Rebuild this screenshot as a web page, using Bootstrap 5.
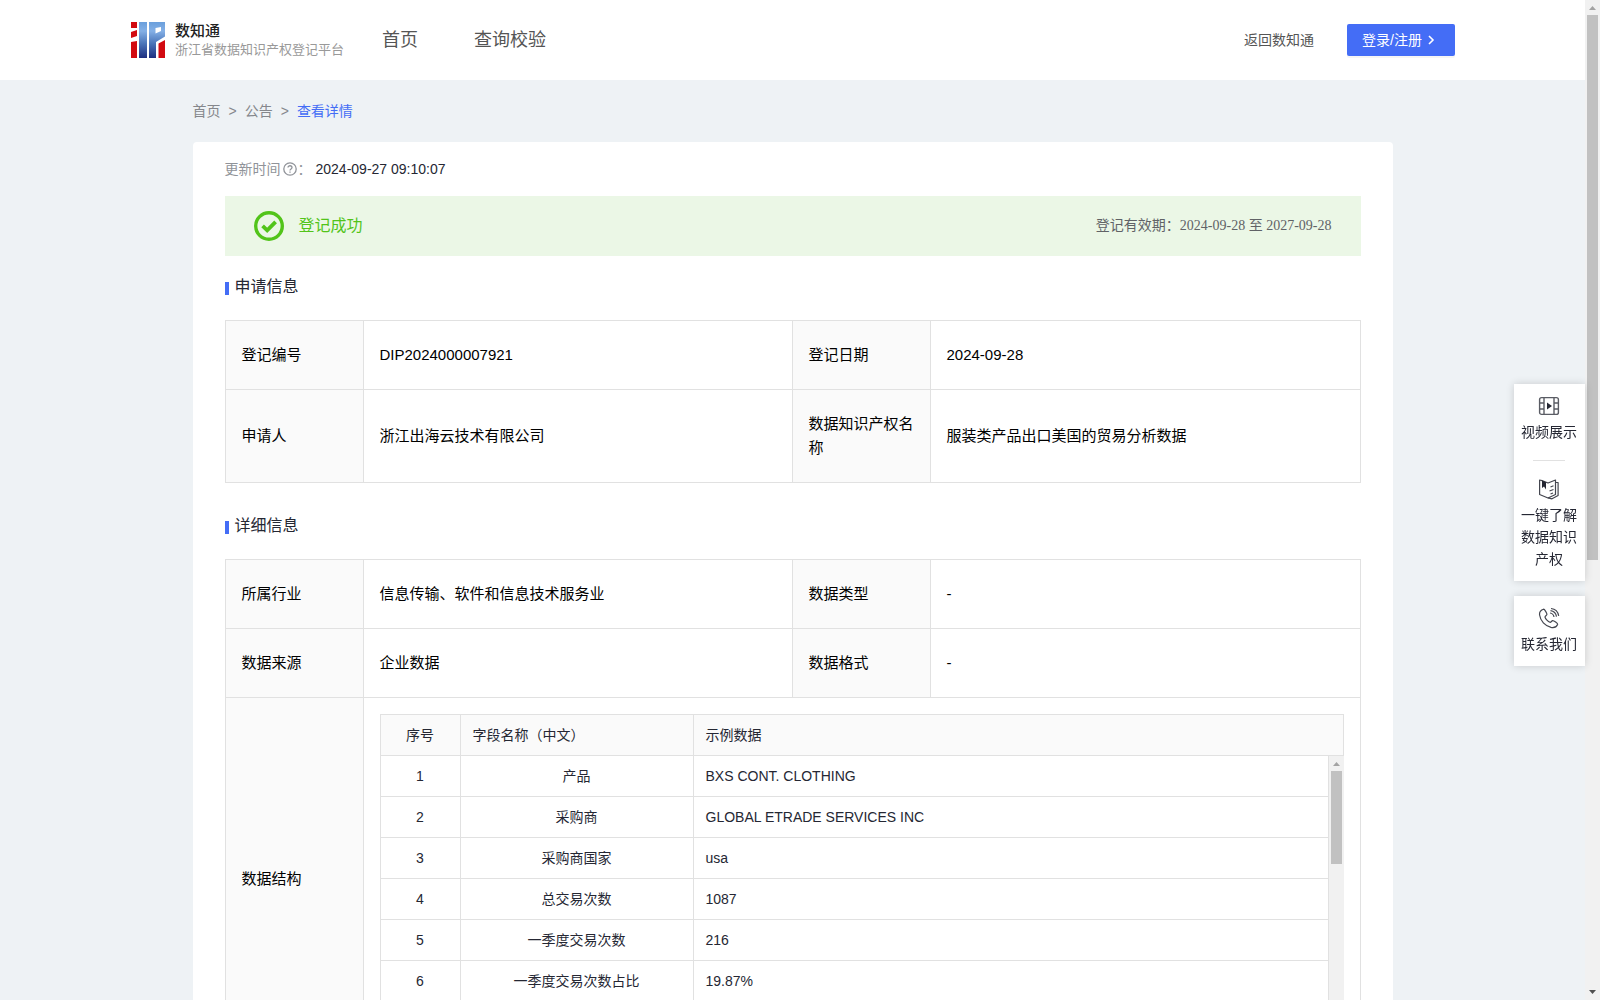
<!DOCTYPE html>
<html lang="zh-CN">
<head>
<meta charset="utf-8">
<meta name="viewport" content="width=device-width, initial-scale=1">
<title>数知通 - 查看详情</title>
<link href="https://cdn.jsdelivr.net/npm/bootstrap@5.3.0/dist/css/bootstrap.min.css" rel="stylesheet">
<style>
  body { font-family: "Liberation Sans", "Noto Sans CJK SC", sans-serif; font-size: 14px; line-height: 22px; color: #252733; background: #eef2f5; }
  a { text-decoration: none; color: inherit; }
  .page-scroll { overflow-y: auto; scrollbar-width: none; }
  .page-scroll::-webkit-scrollbar { display: none; }
  .scroll-track { width: 15px; background: #f1f1f1; padding: 4px 2px; }
  .scroll-track svg { width: 11px; height: 7px; }
  .scroll-thumb { background: #c1c1c1; margin-top: 4px; }
  .page-thumb { height: 545px; }
  .list-thumb { height: 93px; }

  .site-header { height: 80px; padding: 0 130px; }
  .brand-logo { width: 36px; height: 36px; }
  .brand-text { margin-left: 9px; }
  .brand-name { font-size: 15px; line-height: 20px; font-weight: 500; color: #222; }
  .brand-sub { font-size: 13px; line-height: 18px; color: #999; }
  .site-nav { font-size: 18px; gap: 56px; margin-left: 38px; color: #555; }
  .back-link { margin-right: 33px; color: #555; }
  .login-btn { height: 32px; padding: 0 19px 0 15px; border: 0; border-radius: 2px; font-size: 14px; line-height: 22px; color: #fff; background: #446df6; box-shadow: 0 2px 0 rgba(0,0,0,.04); }
  .login-btn:hover { color: #fff; background: #3860e6; }

  .wrap { max-width: 1200px; }
  .crumbs { padding: 20px 0; color: #85878c; gap: 8px; }
  .crumbs .current { color: #446df6; }
  .sheet { border-radius: 4px; padding: 16px 32px 32px; }
  .muted { color: #909399; }
  .help-icon { margin: 0 1px 0 2px; }
  .status-bar { height: 60px; padding: 0 29px; margin: 16px 0 19px; background: #ebf7e6; }
  .status-text { font-size: 16px; color: #52c41a; margin-left: 15px; }
  .validity { font-family: "Liberation Serif", "Noto Sans CJK SC", serif; color: #606266; }
  .sec-title { font-size: 16px; line-height: 24px; margin: 0 0 21px; font-weight: 400; }
  .sec-title::before { content: ""; width: 4px; height: 13px; margin: 2px 6px 0 0; background: #446df6; }
  .info { table-layout: fixed; width: 100%; border-collapse: collapse; font-size: 15px; line-height: 24px; color: #000; }
  .info.upper { margin-bottom: 31px; }
  .info > * > tr > th, .info > * > tr > td { border: 1px solid #e1e1e1; padding: 22px 14px 22px 16px; font-weight: 400; vertical-align: middle; }
  .info > * > tr > th { background: #fafafa; }
  .info > * > tr > td.nest { padding: 16px; }
  .label-col { width: 138px; }
  .value-col { width: 429px; }

  .fields { table-layout: fixed; width: 100%; border-collapse: collapse; font-size: 14px; line-height: 20px; color: #252733; }
  .fields th, .fields td { border: 1px solid #e1e1e1; padding: 10px 12px; font-weight: 400; }
  .fields th { background: #fafafa; }
  .fields .no-col { width: 80px; }
  .fields .name-col { width: 233px; }
  .fields tbody td:nth-child(-n+2) { text-align: center; }
  .list-body { height: 287px; }
  .list-body .fields { margin-top: -1px; }
  .list-rows { overflow-y: auto; scrollbar-width: none; }

  .side-tools { position: fixed; right: 15px; top: 384px; width: 71px; gap: 15px; }
  .side-box { box-shadow: 0 0 8px rgba(0,0,0,.16); padding: 11px 8px 11px 7px; }
  .side-box a { line-height: 22px; }
  .side-box svg { width: 22px; height: 22px; margin-bottom: 4px; }
  .side-box hr { width: 32px; margin: 17px auto; border-color: #888; }
</style>
<script src="https://cdn.jsdelivr.net/npm/bootstrap@5.3.0/dist/js/bootstrap.bundle.min.js"></script>
</head>
<body>
<div class="d-flex vh-100">
  <div class="page-scroll flex-grow-1">
    <header class="site-header bg-white d-flex align-items-center">
      <a href="#" class="d-flex align-items-center">
        <svg class="brand-logo" viewBox="0 0 36 36" aria-hidden="true">
          <defs><linearGradient id="blue" gradientUnits="userSpaceOnUse" x1="0" y1="0" x2="0" y2="36"><stop offset="0" stop-color="#6a9fdc"/><stop offset=".25" stop-color="#84b0e6"/><stop offset=".6" stop-color="#4a74b8"/><stop offset="1" stop-color="#1e2f80"/></linearGradient></defs>
          <g fill="#d20a11"><path d="M1 0h6v6H1zM1 10l6-2v6l-6 2zM1 20l6-1v17H1zM28.500 21.500L35 18v18h-6.500z"/></g>
          <path fill="url(#blue)" d="M9 0h8v36H9z"/>
          <path fill="url(#blue)" fill-rule="evenodd" d="M19 0h16v14.500L26 20v16h-7zM25.500 6v5.500L31 9V5z"/>
        </svg>
        <span class="brand-text d-flex flex-column">
          <span class="brand-name">数知通</span>
          <span class="brand-sub">浙江省数据知识产权登记平台</span>
        </span>
      </a>
      <nav class="site-nav d-flex">
        <a href="#">首页</a>
        <a href="#">查询校验</a>
      </nav>
      <div class="ms-auto d-flex align-items-center">
        <a href="#" class="back-link">返回数知通</a>
        <button type="button" class="btn login-btn d-flex align-items-center">登录/注册
          <svg class="ms-1" width="10" height="10" viewBox="0 0 10 10" fill="none" stroke="#fff" stroke-width="1.600" aria-hidden="true"><path d="M3 1l4 4-4 4"/></svg>
        </button>
      </div>
    </header>

    <main class="wrap mx-auto">
      <nav class="crumbs d-flex" aria-label="breadcrumb">
        <a href="#">首页</a><span>&gt;</span><a href="#">公告</a><span>&gt;</span><a href="#" class="current">查看详情</a>
      </nav>

      <section class="sheet bg-white">
        <div class="d-flex align-items-center">
          <span class="muted">更新时间</span>
          <svg class="help-icon" width="14" height="14" viewBox="0 0 14 14" fill="none" stroke="#909399" stroke-width="1.300" aria-hidden="true"><circle cx="7" cy="7" r="6.200"/><path d="M5 5.600c0-2.500 4-2.400 4 0C9 7 7 7 7 8.600M7 9.600v1.200"/></svg>
          <span class="muted me-1">：</span>
          <span>2024-09-27 09:10:07</span>
        </div>

        <div class="status-bar d-flex align-items-center">
          <svg width="30" height="30" viewBox="0 0 30 30" fill="none" stroke="#52c41a" aria-hidden="true"><circle cx="15" cy="15" r="13.300" stroke-width="3.400"/><path d="M8.600 14.800l4.600 4.500 8.400-8.500" stroke-width="3.800"/></svg>
          <span class="status-text">登记成功</span>
          <span class="validity ms-auto">登记有效期：2024-09-28 至 2027-09-28</span>
        </div>

        <h2 class="sec-title d-flex align-items-center">申请信息</h2>
        <table class="info upper">
          <colgroup><col class="label-col"><col class="value-col"><col class="label-col"><col></colgroup>
          <tbody>
            <tr><th scope="row">登记编号</th><td>DIP2024000007921</td><th scope="row">登记日期</th><td>2024-09-28</td></tr>
            <tr><th scope="row">申请人</th><td>浙江出海云技术有限公司</td><th scope="row">数据知识产权名称</th><td>服装类产品出口美国的贸易分析数据</td></tr>
          </tbody>
        </table>

        <h2 class="sec-title d-flex align-items-center">详细信息</h2>
        <table class="info">
          <colgroup><col class="label-col"><col class="value-col"><col class="label-col"><col></colgroup>
          <tbody>
            <tr><th scope="row">所属行业</th><td>信息传输、软件和信息技术服务业</td><th scope="row">数据类型</th><td>-</td></tr>
            <tr><th scope="row">数据来源</th><td>企业数据</td><th scope="row">数据格式</th><td>-</td></tr>
            <tr>
              <th scope="row">数据结构</th>
              <td colspan="3" class="nest">
                <table class="fields">
                  <colgroup><col class="no-col"><col class="name-col"><col></colgroup>
                  <thead><tr><th class="text-center">序号</th><th>字段名称（中文）</th><th>示例数据</th></tr></thead>
                </table>
                <div class="list-body d-flex">
                  <div class="list-rows flex-grow-1">
                    <table class="fields">
                      <colgroup><col class="no-col"><col class="name-col"><col></colgroup>
                      <tbody>
                        <tr><td>1</td><td>产品</td><td>BXS CONT. CLOTHING</td></tr>
                        <tr><td>2</td><td>采购商</td><td>GLOBAL ETRADE SERVICES INC</td></tr>
                        <tr><td>3</td><td>采购商国家</td><td>usa</td></tr>
                        <tr><td>4</td><td>总交易次数</td><td>1087</td></tr>
                        <tr><td>5</td><td>一季度交易次数</td><td>216</td></tr>
                        <tr><td>6</td><td>一季度交易次数占比</td><td>19.87%</td></tr>
                      </tbody>
                    </table>
                  </div>
                  <div class="scroll-track d-flex flex-column" aria-hidden="true">
                    <svg viewBox="0 0 11 7"><path d="M2 6l3.500-4L9 6z" fill="#a3a3a3"/></svg>
                    <div class="scroll-thumb list-thumb"></div>
                  </div>
                </div>
              </td>
            </tr>
          </tbody>
        </table>
      </section>
    </main>
  </div>

  <div class="scroll-track d-flex flex-column flex-shrink-0" aria-hidden="true">
    <svg viewBox="0 0 11 7"><path d="M2 6l3.500-4L9 6z" fill="#a3a3a3"/></svg>
    <div class="scroll-thumb page-thumb"></div>
    <svg class="mt-auto" viewBox="0 0 11 7"><path d="M2 1l3.500 4L9 1z" fill="#505050"/></svg>
  </div>
</div>

<aside class="side-tools d-flex flex-column text-center">
  <div class="side-box bg-white">
    <a href="#" class="d-block">
      <svg class="d-block mx-auto" viewBox="0 0 22 22" fill="none" stroke="#5a5c64" stroke-width="1.400" aria-hidden="true"><rect x="1.600" y="2.600" width="18.800" height="16.800" rx="2"/><path d="M6 3v16M16 3v16M2 8h4M2 14h4M16 8h4M16 14h4"/><path d="M9 7.500v7l5-3.500z" fill="#252733" stroke="none"/></svg>
      视频展示
    </a>
    <hr>
    <a href="#" class="d-block">
      <svg class="d-block mx-auto" viewBox="0 0 22 22" fill="none" stroke="#44464f" stroke-width="1.200" stroke-linejoin="round" aria-hidden="true"><path d="M1.600 2l2.400.600 6 2.400 7.500-3v14.500l-7.500 3.500-8.400-3.500z"/><path d="M17.500 4.500h2.600v13L14 20.800l-4-1M12.500 9l3-1.300M11.500 13l4-1.500M12.500 16l2.500-1"/><path d="M4 2.500v7.500l2-1.500 2 3V4.200z" fill="#252733" stroke="none"/></svg>
      一键了解数据知识产权
    </a>
  </div>
  <div class="side-box bg-white">
    <a href="#" class="d-block">
      <svg class="d-block mx-auto" viewBox="0 0 22 22" fill="none" stroke="#44464f" stroke-width="1.200" aria-hidden="true"><path d="M5.500 2.200C3 3 1.200 5 1.600 8c.8 6 5.400 11 11.400 12.400 3 .6 5.600-.7 6.600-3 .4-1-4-4-5-3.800-.9.200-1.700 1.900-2.600 1.700-2-.6-4.500-3.300-5-5.200-.2-.9 1.700-1.600 1.900-2.600C9.100 6.500 6.500 2 5.500 2.200z"/><path d="M12 6c2.200.3 3.600 1.600 4 4M12.500 3.700c3.300.4 5.500 2.600 6 6M13 1.500c4.200.5 7 3.200 7.700 7.300"/></svg>
      联系我们
    </a>
  </div>
</aside>
</body>
</html>
